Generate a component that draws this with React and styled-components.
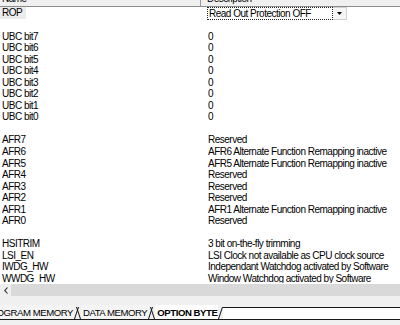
import styled, { createGlobalStyle } from "styled-components";

const GlobalStyle = createGlobalStyle`
  html, body {
    margin: 0;
    padding: 0;
    background: #ffffff;
  }
  body {
    font-family: "Liberation Sans", Arial, sans-serif;
    font-size: 10px;
    letter-spacing: -0.5px;
    color: #000;
  }
`;

const Window = styled.div`
  width: 400px;
  height: 325px;
  display: flex;
  flex-direction: column;
  overflow: hidden;
  background: #fff;
`;

const Header = styled.div`
  display: grid;
  grid-template-columns: 201px 1fr;
  height: 6px;
  overflow: hidden;
  background: #f0f0f0;
  border-bottom: 1px solid #8c8c8c;
  flex: none;
`;

const HeaderCell = styled.div`
  height: 6px;
  padding-left: ${(p) => p.$indent}px;
  border-right: ${(p) => (p.$divider ? "1px solid #9a9a9a" : "none")};
  line-height: 12px;
  overflow: hidden;
`;

const HeaderLabel = styled.span`
  display: block;
  margin-top: -7px;
`;

const List = styled.div`
  flex: 1;
  min-height: 0;
  overflow: hidden;
`;

const Row = styled.div`
  display: grid;
  grid-template-columns: 201px 1fr;
  height: ${(p) => (p.$tall ? 12 : 11.55)}px;
  line-height: ${(p) => (p.$tall ? 12 : 11.55)}px;
  white-space: nowrap;
`;

const NameCell = styled.div`
  padding-left: 2px;
`;

const DescCell = styled.div`
  padding-left: 7px;
`;

const Selected = styled.span`
  display: inline-block;
  height: 12px;
  margin-left: -2px;
  padding: 0 4px 0 2px;
  background: #ececec;
`;

const Combo = styled.div`
  display: flex;
  width: 140px;
  height: 13px;
  margin-left: -1px;
`;

const ComboText = styled.div`
  flex: 1;
  border: 1px dotted #222;
  padding-left: 1px;
  line-height: 11px;
  background: #fff;
`;

const DropButton = styled.div`
  width: 13px;
  display: flex;
  align-items: center;
  justify-content: center;
  background: #f6f6f6;
  border: 1px solid #d0d0d0;
  border-left: none;
`;

const ScrollBar = styled.div`
  display: flex;
  height: 12px;
  margin-top: 1px;
  background: #d9d9d9;
  flex: none;
`;

const ScrollButton = styled.div`
  width: 11px;
  display: flex;
  align-items: center;
  justify-content: center;
  background: #f0f0f0;
`;

const TabArea = styled.div`
  height: 24px;
  background: #f0f0f0;
  display: flex;
  align-items: flex-end;
  flex: none;
`;

const TabStrip = styled.div`
  display: flex;
  align-items: stretch;
  width: 100%;
  height: 14px;
  border-bottom: 1px solid #1a1a1a;
  overflow: hidden;
`;

const Tab = styled.div`
  display: flex;
  align-items: center;
  padding: 1px 1px 0 2px;
  margin-left: ${(p) => p.$shift || 0}px;
  font-size: 9.6px;
  font-weight: ${(p) => (p.$active ? 700 : 400)};
  background: ${(p) => (p.$active ? "#ffffff" : "#f4f4f4")};
  white-space: nowrap;
  letter-spacing: -0.45px;
`;

const Slant = styled.svg`
  flex: none;
  display: block;
  margin-left: ${(p) => p.$overlap || 0}px;
`;

const Rest = styled.div`
  flex: 1;
  margin-top: 2px;
  border-top: 1px solid #1a1a1a;
  background: #fff;
`;

const Footer = styled.div`
  flex: none;
  height: 5px;
  background: #f0f0f0;
`;

function Edge({ dir, overlap }) {
  return (
    <Slant width="5" height="14" viewBox="0 0 5 14" $overlap={overlap}>
      {dir === "right" ? (
        <line x1="0.5" y1="14" x2="4.5" y2="2" stroke="#111" strokeWidth="1" />
      ) : (
        <line x1="0.5" y1="2" x2="4.5" y2="14" stroke="#111" strokeWidth="1" />
      )}
    </Slant>
  );
}

const rows = [
  null,
  ["UBC bit7", "0"],
  ["UBC bit6", "0"],
  ["UBC bit5", "0"],
  ["UBC bit4", "0"],
  ["UBC bit3", "0"],
  ["UBC bit2", "0"],
  ["UBC bit1", "0"],
  ["UBC bit0", "0"],
  null,
  ["AFR7", "Reserved"],
  ["AFR6", "AFR6 Alternate Function Remapping inactive"],
  ["AFR5", "AFR5 Alternate Function Remapping inactive"],
  ["AFR4", "Reserved"],
  ["AFR3", "Reserved"],
  ["AFR2", "Reserved"],
  ["AFR1", "AFR1 Alternate Function Remapping inactive"],
  ["AFR0", "Reserved"],
  null,
  ["HSITRIM", "3 bit on-the-fly trimming"],
  ["LSI_EN", "LSI Clock not available as CPU clock source"],
  ["IWDG_HW", "Independant Watchdog activated by Software"],
  ["WWDG_HW", "Window Watchdog activated by Software"],
];

export default function App() {
  return (
    <Window>
      <GlobalStyle />
      <Header>
        <HeaderCell $indent={2} $divider>
          <HeaderLabel>Name</HeaderLabel>
        </HeaderCell>
        <HeaderCell $indent={6}>
          <HeaderLabel>Description</HeaderLabel>
        </HeaderCell>
      </Header>

      <List>
        <Row $tall>
          <NameCell>
            <Selected>ROP</Selected>
          </NameCell>
          <DescCell>
            <Combo>
              <ComboText>Read Out Protection OFF</ComboText>
              <DropButton>
                <svg width="5" height="3" viewBox="0 0 5 3">
                  <path d="M0 0h5L2.5 3z" fill="#000" />
                </svg>
              </DropButton>
            </Combo>
          </DescCell>
        </Row>
        {rows.map((r, i) => (
          <Row key={i}>
            <NameCell>{r ? r[0] : ""}</NameCell>
            <DescCell>{r ? r[1] : ""}</DescCell>
          </Row>
        ))}
      </List>

      <ScrollBar>
        <ScrollButton>
          <svg width="4" height="7" viewBox="0 0 4 7">
            <path d="M3.5 0.5L0.8 3.5l2.7 3" fill="none" stroke="#222" strokeWidth="1.1" />
          </svg>
        </ScrollButton>
      </ScrollBar>

      <TabArea>
        <TabStrip>
          <Tab $shift={-18}>PROGRAM MEMORY</Tab>
          <Edge dir="right" />
          <Edge dir="left" overlap={-3} />
          <Tab>DATA MEMORY</Tab>
          <Edge dir="right" />
          <Edge dir="left" overlap={-3} />
          <Tab $active>OPTION BYTE</Tab>
          <Edge dir="right" />
          <Rest />
        </TabStrip>
      </TabArea>
      <Footer />
    </Window>
  );
}
